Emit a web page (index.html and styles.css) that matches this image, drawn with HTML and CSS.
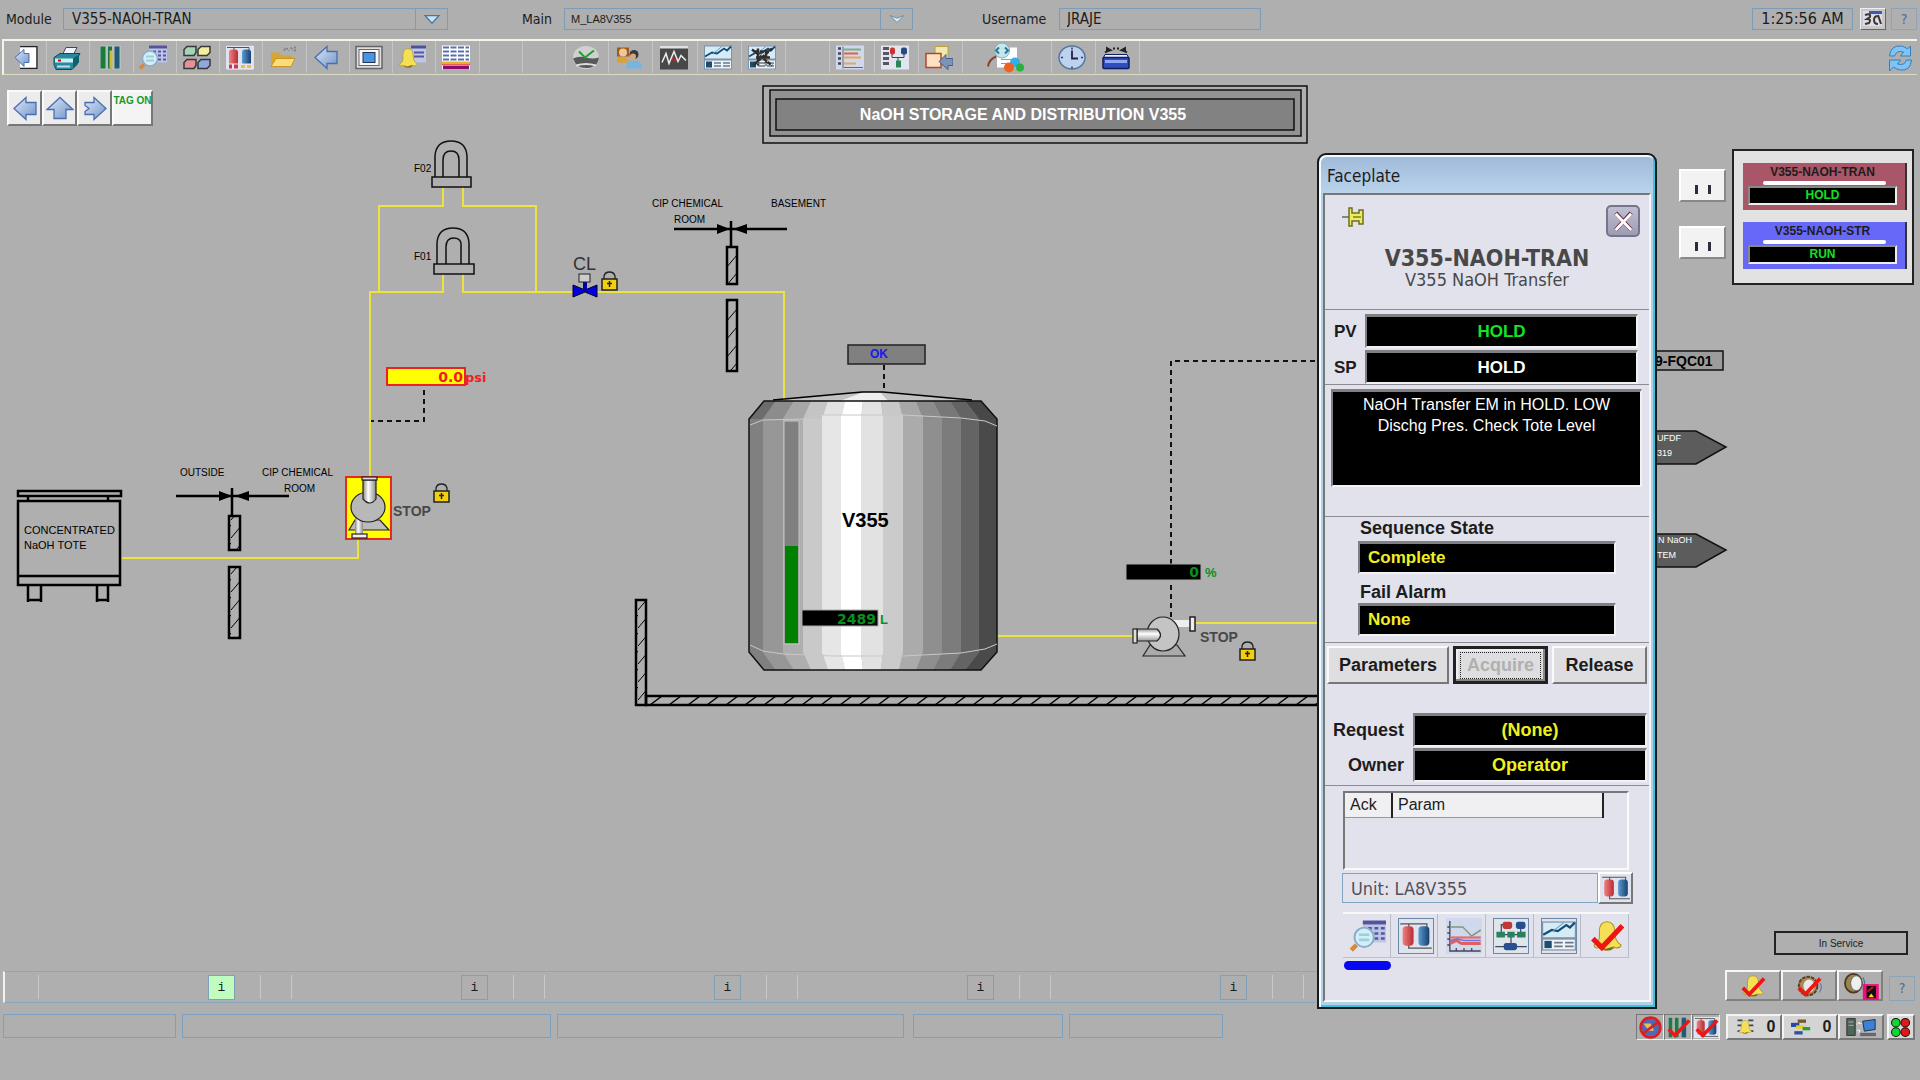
FILE: index.html
```html
<!DOCTYPE html>
<html lang="en">
<head>
<meta charset="utf-8">
<title>NaOH Storage and Distribution V355</title>
<link rel="stylesheet" href="styles.css">
</head>
<body>
<svg class="defs" aria-hidden="true">
  <defs>
    <linearGradient id="blueArrow" x1="0" y1="0" x2="1" y2="1"><stop offset="0" stop-color="#dfe8f4"/><stop offset="1" stop-color="#6f94cc"/></linearGradient>
    <linearGradient id="steel" x1="0" y1="0" x2="1" y2="0"><stop offset="0" stop-color="#888"/><stop offset=".4" stop-color="#fff"/><stop offset="1" stop-color="#888"/></linearGradient>
    <linearGradient id="steelV" x1="0" y1="0" x2="0" y2="1"><stop offset="0" stop-color="#999"/><stop offset=".4" stop-color="#fff"/><stop offset="1" stop-color="#999"/></linearGradient>
    <linearGradient id="redTank" x1="0" y1="0" x2="1" y2="0"><stop offset="0" stop-color="#f08080"/><stop offset="1" stop-color="#b82c34"/></linearGradient>
    <linearGradient id="blueTank" x1="0" y1="0" x2="1" y2="0"><stop offset="0" stop-color="#5b9bd0"/><stop offset="1" stop-color="#173e70"/></linearGradient>
    <pattern id="hatch" width="11" height="18" patternUnits="userSpaceOnUse"><path d="M0 16 L11 3" stroke="#000" stroke-width="1"/></pattern>
    <pattern id="hatchH" width="19" height="11" patternUnits="userSpaceOnUse" x="646" y="695"><path d="M4 10 L16 1" stroke="#000" stroke-width="1.5"/></pattern>
    <symbol id="lock" viewBox="0 0 17 20"><path d="M3 8V5Q4 1 8.500 1T14 5V8" fill="none" stroke="#222" stroke-width="1.300"/><rect x="1" y="8" width="15" height="11" fill="#f2cf10" stroke="#222" stroke-width="1.500"/><path d="M8.500 10v6M6 12.500h5" stroke="#222" stroke-width="1.500"/></symbol>
    <symbol id="tanks" viewBox="0 0 28 24"><rect width="28" height="24" fill="#dfe3ee"/><path d="M1 2H23V5M8 2V5M8 19V22H27" fill="none" stroke="#555"/><rect x="3" y="4" width="9" height="16" rx="3" fill="url(#redTank)"/><rect x="16" y="4" width="9" height="16" rx="3" fill="url(#blueTank)"/></symbol>
    <symbol id="bell" viewBox="0 0 28 24"><path d="M4 19Q9 17 8 9Q8 1 14 1T20 9Q20 16 25 19Q24 22 20 21Q14 25 8 21Q4 22 4 19Z" fill="#f5df55" stroke="#a8922a" stroke-width=".8"/><path d="M8 20l5 2 7-2-3 3h-5z" fill="#7d6b20"/></symbol>
    <symbol id="tick" viewBox="0 0 28 24"><path d="M3 14L10 21L26 4" fill="none" stroke="#f01414" stroke-width="4"/></symbol>
    <symbol id="magnify" viewBox="0 0 28 24"><rect x="10" y="0" width="18" height="17" fill="#bfc4e6"/><rect x="10" y="0" width="18" height="3" fill="#54549c"/><path d="M14 6h3m2 0h3m2 0h3M14 10h3m2 0h3m2 0h3M19 14h3m2 0h3" stroke="#5058a0" stroke-width="2"/><circle cx="11" cy="13" r="7.500" fill="#d4eef8" stroke="#88aec8" stroke-width="1.500"/><path d="M7 11h8M7 15h8" stroke="#9cd0dc" stroke-width="2"/><path d="M5 19L1 23" stroke="#d8883c" stroke-width="3.500"/></symbol>
    <symbol id="trend" viewBox="0 0 28 24"><rect width="28" height="24" fill="#7f93a6"/><rect x="1" y="1" width="26" height="12" fill="#d5ecf6"/><path d="M1 11L8 7L13 8L20 3L23 5L27 1" fill="none" stroke="#154d78" stroke-width="1.800"/><path d="M9 8L18 1" stroke="#62a6c8"/><rect x="1" y="15" width="26" height="8" fill="#eef3f8"/><rect x="2" y="16" width="6" height="6" fill="#1c4a70"/><path d="M10 17.500h7m2 0h7M10 20.500h7m2 0h7" stroke="#69798a" stroke-width="1.500"/></symbol>
    <symbol id="left" viewBox="0 0 28 24"><path d="M3 12L15 1V6H25V18H15V23Z" fill="url(#blueArrow)" stroke="#4a6fae" stroke-width="1.300"/></symbol>
  </defs>
</svg>

<header class="topbar">
  <label for="module" class="lbl lbl-module">Module</label>
  <div class="combo combo-module"><input id="module" value="V355-NAOH-TRAN"><button class="drop" aria-label="Open module list"><svg viewBox="0 0 20 14"><path d="M2 3H18L10 12Z" fill="#cfe2f2" stroke="#3f79a8" stroke-width="1.500"/></svg></button></div>
  <label for="main" class="lbl lbl-main">Main</label>
  <div class="combo combo-main"><input id="main" class="narrow" value="M_LA8V355"><button class="drop" aria-label="Open main list"><svg viewBox="0 0 20 14"><path d="M2 3L10 6L18 3L10 11Z" fill="#dcecf6" stroke="#5c89a8"/></svg></button></div>
  <label for="user" class="lbl lbl-user">Username</label>
  <input id="user" class="user" value="JRAJE">
  <output class="clock">1:25:56 AM</output>
  <button class="mini" aria-label="Session"><svg viewBox="0 0 24 20"><rect x="2" y="2" width="19" height="15" fill="#d8def0"/><rect x="8" y="2" width="13" height="3" fill="#4058b0"/><path d="M4 6Q10 4 9 8L6 10Q11 10 8 14L4 15" stroke="#463420" stroke-width="2" fill="none"/><path d="M17 7q-4 0-4 4t4 4M17 6l3 9" stroke="#463420" stroke-width="2" fill="none"/></svg></button>
  <button class="help">?</button>
</header>

<nav class="toolbar" aria-label="Operations">
  <div class="tools">
    <button aria-label="Exit"><svg viewBox="0 0 28 24"><path d="M10 0H28V24H10" fill="#fff"/><path d="M10 1H27V23H10" fill="none" stroke="#222" stroke-width="1.500"/><path d="M5 12L14 4V8H19V17H14V21Z" fill="url(#blueArrow)" stroke="#4a6fae"/></svg></button>
    <button aria-label="Print"><svg viewBox="0 0 28 24"><path d="M9 10L13 2H24L20 10" fill="#f0f4ff" stroke="#446"/><path d="M1 12L7 8H27L24 13V19L19 24H3L1 19Z" fill="#2a8a9c" stroke="#0c4a58"/><path d="M2 13H20V17H2Z" fill="#c8f0f0"/><path d="M20 13L26 9V17L20 22Z" fill="#10606e"/><path d="M5 15h3" stroke="#c00" stroke-width="2"/><path d="M4 21H17" stroke="#bde" stroke-width="2"/></svg></button>
    <button aria-label="Levels"><svg viewBox="0 0 28 24"><rect x="4" width="21" height="24" fill="#b8c0c4"/><path d="M7 1V23" stroke="#1b7c38" stroke-width="5"/><path d="M14 1V23" stroke="#207050" stroke-width="4"/><path d="M15 5V23" stroke="#d0bc30" stroke-width="3"/><path d="M21 1V23" stroke="#1d5c76" stroke-width="5"/></svg></button>
    <button aria-label="Browse detail"><svg><use href="#magnify"/></svg></button>
    <button aria-label="Overview"><svg viewBox="0 0 28 24"><g stroke="#383838" stroke-width="1.500"><path d="M4 1h9v6l-2 3H1V4z" fill="#a6d4b6"/><path d="M18 1h9v6l-3 3h-9V4z" fill="#f2efa0"/><path d="M4 14h9v6l-2 3H1v-6z" fill="#e89098"/><path d="M18 14h9v6l-3 3h-9v-6z" fill="#90a8dc"/></g></svg></button>
    <button aria-label="Units"><svg viewBox="0 0 28 24"><use href="#tanks" width="28" height="24"/><rect x="1" y="18" width="26" height="6" fill="#e8e4ee"/><path d="M3 21h3m2 0h4" stroke="#c83850" stroke-width="4"/><path d="M15 21h4m2 0h4" stroke="#e0c050" stroke-width="3"/></svg></button>
    <button aria-label="Open"><svg viewBox="0 0 28 24"><path d="M2 7h8l2 3h11v10H2z" fill="#d9a52f"/><path d="M7 13h19l-4 8H2z" fill="#f8dd7a" stroke="#c8952a"/><path d="M15 5q2-4 5 0m2-3l2 3m2-4v6" fill="none" stroke="#777" stroke-width="1.500" stroke-dasharray="2 1"/></svg></button>
    <button aria-label="Back"><svg><use href="#left"/></svg></button>
    <button aria-label="Display"><svg viewBox="0 0 28 24"><rect x="1" y="1" width="26" height="22" fill="#ddd" stroke="#666" stroke-width="1.500"/><rect x="4" y="4" width="20" height="16" fill="#f8f8f8" stroke="#666"/><rect x="8" y="7" width="12" height="10" fill="#4a94e4" stroke="#235"/></svg></button>
    <button aria-label="Alarm list"><svg viewBox="0 0 28 24"><rect x="12" y="0" width="15" height="17" fill="#c0c6e4"/><path d="M12 1.500h15" stroke="#4850a0" stroke-width="3"/><path d="M15 7h10M15 11h10" stroke="#5058a0" stroke-width="2"/><use href="#bell" x="-3" y="1" width="24" height="23"/></svg></button>
    <button aria-label="Event table"><svg viewBox="0 0 28 24"><rect width="28" height="24" fill="#fff"/><path d="M1 2h26M1 6h26M1 10h26M1 14h26" stroke="#5870a8" stroke-width="2" stroke-dasharray="6 1.500"/><path d="M0 17h28" stroke="#ecb030" stroke-width="2"/><path d="M0 19h28" stroke="#e06060" stroke-width="2"/><path d="M1 22h26" stroke="#8c0c6c" stroke-width="3.500"/></svg></button>
    <span></span><span></span>
    <button aria-label="Acknowledge"><svg viewBox="0 0 28 24"><ellipse cx="14" cy="12" rx="13" ry="11.500" fill="#d0d0d0"/><path d="M1 13Q7 10 14 12T27 12Q26 20 19 22Q10 24 4 19Z" fill="#585858"/><path d="M4 20Q14 17 24 20" stroke="#ddd" stroke-width="2" fill="none"/><path d="M7 6L13 12L22 5" fill="none" stroke="#18a030" stroke-width="2"/></svg></button>
    <button aria-label="Users"><svg viewBox="0 0 28 24"><path d="M2 2h12v9H2z" fill="#a05a20"/><circle cx="8" cy="7" r="4" fill="#f0c890"/><path d="M2 17V13Q8 9 14 15V17Z" fill="#e0a030"/><circle cx="19" cy="9" r="4.500" fill="#333a40"/><circle cx="18" cy="11" r="3" fill="#d8a878"/><path d="M11 23Q11 15 19 15T27 23Z" fill="#78b4e0"/></svg></button>
    <button aria-label="Signal chart"><svg viewBox="0 0 28 24"><rect width="28" height="24" fill="#484848"/><rect width="28" height="3" fill="#e0e0e0"/><path d="M2 17L6 8L9 18L14 6L18 16L21 10L26 15" fill="none" stroke="#eee" stroke-width="1.500"/><path d="M12 13l4 3" stroke="#d02020" stroke-width="2"/></svg></button>
    <button aria-label="Trend"><svg><use href="#trend"/></svg></button>
    <button aria-label="Trend off"><svg viewBox="0 0 28 24"><use href="#trend" width="28" height="24"/><path d="M4 4L24 20M24 3L5 20M7 6h14M8 12h14M10 3v17M18 4v16" stroke="#302d2b" stroke-width="2.500" stroke-dasharray="4 1"/></svg></button>
    <span></span>
    <button aria-label="Recipe list"><svg viewBox="0 0 28 24"><rect width="28" height="24" fill="#d2d8ec"/><path d="M2 3h3M2 8h3M2 13h3M2 18h3" stroke="#445" stroke-width="2.500"/><path d="M7 1v22M8 22h19" stroke="#667"/><path d="M8 4h17" stroke="#78b080" stroke-width="2"/><path d="M8 8h14" stroke="#e06050" stroke-width="2"/><path d="M8 12h17M8 18h12" stroke="#e0a858" stroke-width="2"/></svg></button>
    <button aria-label="Procedure"><svg viewBox="0 0 28 24"><rect width="28" height="24" fill="#e2e4ee"/><path d="M2 3h6M2 8h6M2 13h6M2 18h6" stroke="#556" stroke-width="3"/><path d="M11 7v5h12V7M17 12v4" fill="none" stroke="#444"/><rect x="9" y="2" width="5" height="7" rx="2" fill="#cc3030"/><rect x="20" y="2" width="6" height="7" rx="2" fill="#244a80"/><rect x="15" y="15" width="5" height="7" fill="#28865a"/></svg></button>
    <button aria-label="Transfer"><svg viewBox="0 0 28 24"><rect x="10" y="1" width="13" height="12" fill="#f0e8b0" stroke="#c0a040"/><rect x="1" y="8" width="15" height="14" fill="#ffe0c0" stroke="#b04828" stroke-width="1.500"/><path d="M14 16L21 9V13H28V20H23V24Z" fill="#7d93b8" stroke="#46608c"/></svg></button>
    <button class="wide" aria-label="Search batch"><svg viewBox="0 0 40 30"><rect x="12" y="5" width="20" height="20" fill="#fff"/><path d="M16 17h12M16 21h12" stroke="#999"/><circle cx="17" cy="8" r="7.500" fill="#c4e6ee" stroke="#88aab4"/><path d="M14 5l-3 3 3 3M20 5l3 3-3 3" fill="none" stroke="#2c7890" stroke-width="2"/><path d="M11 14Q4 17 3 24" stroke="#884030" stroke-width="2" fill="none"/><circle cx="30" cy="20" r="5" fill="#30b0e8"/><circle cx="24" cy="25" r="5" fill="#f06020"/><circle cx="35" cy="25" r="4" fill="#28b040"/></svg></button>
    <button aria-label="Clock"><svg viewBox="0 0 28 24"><ellipse cx="14" cy="12" rx="13" ry="11.500" fill="#bdd2ee" stroke="#55779e" stroke-width="1.500"/><path d="M14 5V13H20" fill="none" stroke="#224" stroke-width="1.800"/><path d="M14 2v2m0 17v2M3 12h2m18 0h2" stroke="#335" stroke-width="1.500"/></svg></button>
    <button aria-label="Archive"><svg viewBox="0 0 28 24"><path d="M4 1l7 4-7 2zM24 1l-7 4 7 2z" fill="#222"/><path d="M11 3h2m2 0h2M3 7l5-3M25 7l-5-3" stroke="#222" stroke-width="2"/><path d="M1 13L3 9H25L27 13Z" fill="#eef" stroke="#112060"/><rect x="1" y="12" width="26" height="11" rx="1" fill="#2f4ec0" stroke="#101c60" stroke-width="1.500"/><path d="M3 16h22" stroke="#90a8f0" stroke-width="3"/></svg></button>
    <span></span>
  </div>
  <button class="refresh" aria-label="Refresh"><svg viewBox="0 0 24 28"><path d="M1 12Q2 1 13 2Q17 3 19 5L22 2V12H12L15 8Q8 6 6 12Z" fill="#80c4f6" stroke="#3080c0"/><path d="M23 16Q22 27 12 26Q7 25 5 23L1 27V16H12L9 20Q16 22 18 16Z" fill="#80c4f6" stroke="#3080c0"/></svg></button>
</nav>

<main class="stage">
  <svg class="diagram" viewBox="0 75 1920 895" role="img" aria-label="NaOH storage and distribution diagram">
    <g class="pipe">
      <path d="M443 187V206H379V292"/><path d="M463 187V206H536V292"/>
      <path d="M443 274V292H370V476"/><path d="M463 274V292H784V401"/>
      <path d="M358 539V558H122"/><path d="M997 636H1134"/><path d="M1195 623H1320"/>
    </g>
    <g class="dash"><path d="M424 390V421H371"/><path d="M884 365V394"/><path d="M1171 564V361H1320"/><path d="M1171 585V618"/></g>

    <g class="line">
      <path d="M435 177V156Q436 141 451 141T467 156V177"/><path d="M443 177V160Q443 151 451 151T459 160V177"/><rect x="432" y="177" width="39" height="10"/>
      <path d="M437 264V243Q438 228 453 228T469 243V264"/><path d="M446 264V247Q446 238 454 238T461 247V264"/><rect x="434" y="264" width="40" height="10"/>
    </g>
    <text class="thin" x="414" y="172">F02</text><text class="thin" x="414" y="260">F01</text>

    <g class="line heavy">
      <rect x="18" y="491" width="103" height="5"/><path d="M28 496V501M108 496V501"/><rect x="18" y="501" width="102" height="84"/><path d="M18 576H120M28 585V602M41 585V602M28 600H41M97 585V602M108 585V602M97 600H108"/>
    </g>
    <text class="tote" x="24" y="534">CONCENTRATED</text><text class="tote" x="24" y="549">NaOH TOTE</text>

    <g class="line heavy"><path d="M176 496H289M232 488V516"/><rect x="229" y="516" width="11" height="34" fill="url(#hatch)"/><rect x="229" y="567" width="11" height="71" fill="url(#hatch)"/></g>
    <path d="M219 491L232 496L219 501ZM249 491L235 496L249 501Z"/>
    <text class="thin" x="180" y="476">OUTSIDE</text><text class="thin" x="262" y="476">CIP CHEMICAL</text><text class="thin" x="284" y="492">ROOM</text>

    <g class="line heavy"><path d="M674 229H787M731 221V247"/><rect x="727" y="247" width="10" height="37" fill="url(#hatch)"/><rect x="727" y="300" width="10" height="71" fill="url(#hatch)"/></g>
    <path d="M717 224L730 229L717 234ZM747 224L733 229L747 234Z"/>
    <text class="thin" x="652" y="207">CIP CHEMICAL</text><text class="thin" x="674" y="223">ROOM</text><text class="thin" x="771" y="207">BASEMENT</text>

    <rect x="346" y="477" width="45" height="62" fill="#ff0" stroke="#e8281c" stroke-width="2"/>
    <g stroke="#222" stroke-width="1.200"><path d="M349 530L355 520H380L389 530Z" fill="#bbb"/><path d="M355 515H363V535H355Z" fill="url(#steel)" stroke="none"/><rect x="352" y="534" width="15" height="4" fill="#eee"/><ellipse cx="368" cy="507" rx="17" ry="15" fill="#b8b8b8"/><path d="M363 480H376V499Q370 507 363 499Z" fill="url(#steel)"/><rect x="362" y="477" width="15" height="3" fill="#ddd"/></g>
    <text class="stop" x="393" y="516">STOP</text><use href="#lock" x="433" y="483" width="17" height="20"/>

    <path d="M573 285L585 290L597 285V297L585 292L573 297Z" fill="#0000e0" stroke="#002"/><path d="M585 282V291" stroke="#00a" stroke-width="4"/><rect x="579" y="274" width="11" height="8" fill="#ccc" stroke="#222"/>
    <text class="cl" x="573" y="270">CL</text><use href="#lock" x="601" y="271" width="17" height="20"/>

    <rect x="387" y="368" width="78" height="17" fill="#ff0" stroke="#f02020" stroke-width="2"/>
    <text class="num red" x="463" y="382" text-anchor="end">0.0</text><text class="psi red" x="465" y="382">psi</text>

    <rect x="848" y="345" width="77" height="19" fill="#808080" stroke="#222" stroke-width="1.500"/><text class="ok" x="870" y="358">OK</text>

    <g class="tank">
      <path d="M764 401L749 419H763L776 401Z" fill="#6c6c6c"/><path d="M776 401L763 419H783L794 401Z" fill="#8c8c8c"/><path d="M794 401L783 419H803L811 401Z" fill="#a6a6a6"/><path d="M811 401L803 419H822L828 401Z" fill="#c4c4c4"/><path d="M828 401L822 419H841L845 401Z" fill="#e2e2e2"/><path d="M845 401L841 419H861L863 401Z" fill="#fff"/><path d="M863 401L861 419H883L881 401Z" fill="#e2e2e2"/><path d="M881 401L883 419H903L899 401Z" fill="#c8c8c8"/><path d="M899 401L903 419H923L916 401Z" fill="#a8a8a8"/><path d="M916 401L923 419H942L933 401Z" fill="#8c8c8c"/><path d="M933 401L942 419H961L950 401Z" fill="#787878"/><path d="M950 401L961 419H979L965 401Z" fill="#646464"/><path d="M965 401L979 419H997L981 401Z" fill="#484848"/>
      <path d="M749 419h14v233h-14z" fill="#808080"/><path d="M763 419h20v233h-20z" fill="#979797"/><path d="M783 419h20v233h-20z" fill="#aeaeae"/><path d="M803 419h19v233h-19z" fill="#c9c9c9"/><path d="M822 415h19v240h-19z" fill="#e6e6e6"/><path d="M841 415h20v240h-20z" fill="#fff"/><path d="M861 415h22v240h-22z" fill="#e2e2e2"/><path d="M883 415h20v240h-20z" fill="#cbcbcb"/><path d="M903 415h20v240h-20z" fill="#ababab"/><path d="M923 419h19v233h-19z" fill="#8f8f8f"/><path d="M942 419h19v233h-19z" fill="#7c7c7c"/><path d="M961 419h18v233h-18z" fill="#646464"/><path d="M979 419h18v233h-18z" fill="#4a4a4a"/>
      <path d="M764 670L749 652H763L776 670Z" fill="#808080"/><path d="M776 670L763 652H783L794 670Z" fill="#979797"/><path d="M794 670L783 652H803L811 670Z" fill="#aeaeae"/><path d="M811 670L803 652H822L828 670Z" fill="#c9c9c9"/><path d="M828 670L822 652H841L845 670Z" fill="#e6e6e6"/><path d="M845 670L841 652H861L863 670Z" fill="#fff"/><path d="M863 670L861 652H883L881 670Z" fill="#e2e2e2"/><path d="M881 670L883 652H903L899 670Z" fill="#cbcbcb"/><path d="M899 670L903 652H923L916 670Z" fill="#ababab"/><path d="M916 670L923 652H942L933 670Z" fill="#8f8f8f"/><path d="M933 670L942 652H961L950 670Z" fill="#7c7c7c"/><path d="M950 670L961 652H979L965 670Z" fill="#646464"/><path d="M965 670L979 652H997L981 670Z" fill="#4a4a4a"/>
      <path d="M773 401L862 392H883L972 401Z" fill="#c2c2c2"/><path d="M840 401L864 392H880L888 401Z" fill="#eee"/>
      <path d="M773 400L862 392H883L972 400" fill="none" stroke="#000" stroke-width="1.500"/>
      <path d="M764 401H981L997 419V652L981 670H764L749 652V419Z" fill="none" stroke="#111" stroke-width="1.500"/>
      <path d="M750 425L763 420L803 419L822 415H903L961 418L985 421L997 426M750 645L763 651L783 654L833 656H903L961 653L985 649L997 644" fill="none" stroke="#c8c8c8"/>
    </g>
    <rect x="784" y="421" width="15" height="223" fill="#808080" stroke="#c4c4c4"/><rect x="785" y="546" width="13" height="97" fill="#008000"/>
    <text class="vessel" x="842" y="527">V355</text>
    <rect x="802" y="610" width="76" height="16" stroke="#aaa"/><text class="num green" x="876" y="624" text-anchor="end">2489</text><text class="unit green" x="880" y="624">L</text>

    <g class="line heavy"><rect x="636" y="600" width="10" height="105" fill="url(#hatch)"/><rect x="646" y="696" width="700" height="9" fill="url(#hatchH)"/></g>

    <g stroke="#222" stroke-width="1.200"><path d="M1143 656L1150 645H1177L1185 656Z" fill="#aaa"/><path d="M1172 620h18v7h-18z" fill="#eee" stroke="none"/><ellipse cx="1163" cy="634" rx="16" ry="17" fill="#c4c4c4"/><path d="M1137 629H1157Q1164 635 1157 641H1137Z" fill="url(#steelV)"/><rect x="1133" y="629" width="4" height="14" fill="#ddd"/><rect x="1190" y="617" width="5" height="14" fill="#eee" stroke-width="1.500"/></g>
    <text class="stop" x="1200" y="642">STOP</text><use href="#lock" x="1239" y="641" width="17" height="20"/>
    <rect x="1126" y="564" width="75" height="16" stroke="#aaa"/><text class="num green" x="1199" y="577" text-anchor="end">0</text><text class="unit green" x="1205" y="577">%</text>

    <g fill="none" stroke="#111" stroke-width="1.500"><rect x="763" y="86" width="544" height="57"/><rect x="770" y="90" width="531" height="46" fill="#929292"/><rect x="776" y="99" width="518" height="31" fill="#828282"/></g>
    <text class="heading" x="1023" y="120" text-anchor="middle">NaOH STORAGE AND DISTRIBUTION V355</text>

    <rect x="1640" y="351" width="83" height="19" fill="#9c9c9c" stroke="#111" stroke-width="1.500"/><text class="tag" x="1655" y="366">9-FQC01</text>
    <path d="M1640 431H1696L1726 447L1696 464H1640Z" fill="#5c5c5c" stroke="#111" stroke-width="1.500"/><text class="dest" x="1657" y="441">UFDF</text><text class="dest" x="1657" y="456">319</text>
    <path d="M1640 534H1696L1726 550L1696 567H1640Z" fill="#5c5c5c" stroke="#111" stroke-width="1.500"/><text class="dest" x="1658" y="543">N NaOH</text><text class="dest" x="1657" y="558">TEM</text>
  </svg>

  <div class="pager">
    <button aria-label="Previous"><svg><use href="#left"/></svg></button>
    <button aria-label="Up"><svg viewBox="0 0 28 24"><path d="M14 1L27 13H20V22H8V13H1Z" fill="url(#blueArrow)" stroke="#4a6fae" stroke-width="1.300"/></svg></button>
    <button aria-label="Next"><svg viewBox="0 0 28 24"><path d="M25 12L13 1V6H4V9L8 12L4 15V18H13V23Z" fill="url(#blueArrow)" stroke="#4a6fae" stroke-width="1.300"/></svg></button>
    <button class="tagon">TAG ON</button>
  </div>

  <div class="holds"><button aria-label="Pause transfer"><i></i><i></i></button><button aria-label="Pause storage"><i></i><i></i></button></div>
  <section class="modules">
    <div class="mod tran"><span class="name">V355-NAOH-TRAN</span><span class="rule"></span><span class="state">HOLD</span></div>
    <div class="mod str"><span class="name">V355-NAOH-STR</span><span class="rule"></span><span class="state">RUN</span></div>
  </section>
  <button class="service">In Service</button>

  <section class="faceplate" aria-label="Faceplate">
    <h2 class="caption">Faceplate</h2>
    <div class="client">
      <div class="head">
        <div class="headrow">
          <button class="pin" aria-label="Pin"><svg viewBox="0 0 26 20"><path d="M0 10H7" stroke="#666" stroke-width="1.500"/><path d="M7 1v18h3v-5h7v3h4V3h-4v3h-7V1z" fill="#ecec60" stroke="#6e6e20" stroke-width="1.500"/><path d="M11 10h8" stroke="#9a9a30" stroke-width="2"/></svg></button>
          <button class="close" aria-label="Close"><svg viewBox="0 0 34 32"><path d="M8 6L27 27M27 6L8 27" stroke="#6c2c3c" stroke-width="5"/><path d="M8 7L27 27M27 7L8 27" stroke="#fff" stroke-width="3.500"/></svg></button>
        </div>
        <h1>V355-NAOH-TRAN</h1>
        <p>V355 NaOH Transfer</p>
      </div>
      <div class="values">
        <span>PV</span><output class="well green-t">HOLD</output>
        <span>SP</span><output class="well">HOLD</output>
      </div>
      <div class="note"><p class="well msg">NaOH Transfer EM in HOLD. LOW<br>Dischg Pres. Check Tote Level</p></div>
      <div class="seq">
        <span>Sequence State</span><output class="well yellow">Complete</output>
        <span class="fail">Fail Alarm</span><output class="well yellow">None</output>
      </div>
      <div class="actions">
        <div class="btns"><button class="b-par">Parameters</button><button class="b-acq" disabled><span>Acquire</span></button><button class="b-rel">Release</button></div>
        <div class="owner">
          <span>Request</span><output class="well yellow">(None)</output>
          <span>Owner</span><output class="well yellow">Operator</output>
        </div>
      </div>
      <div class="detail">
        <div class="grid"><table><thead><tr><th class="c-ack">Ack</th><th class="c-par">Param</th></tr></thead></table></div>
        <div class="unitrow"><input aria-label="Unit" value="Unit: LA8V355"><button aria-label="Unit faceplate"><svg><use href="#tanks"/></svg></button></div>
        <div class="links">
          <button aria-label="Detail"><svg><use href="#magnify"/></svg></button>
          <button aria-label="Units"><svg class="framed"><use href="#tanks"/></svg></button>
          <button aria-label="History"><svg viewBox="0 0 28 24" preserveAspectRatio="none"><rect width="28" height="24" fill="#d0d8ee"/><path d="M3 2V22H27" fill="none" stroke="#445"/><path d="M3 6H13L20 12L27 8" fill="none" stroke="#7a9a80"/><path d="M3 13h24" stroke="#e07070" stroke-width="1.500"/><path d="M3 17l5-2 4 2h15" fill="none" stroke="#e06060" stroke-width="2"/><path d="M3 15l6-1 5 1h13" fill="none" stroke="#7070e0"/><path d="M1 6h2M1 10h2M1 14h2M1 18h2M8 22v-2M14 22v-2M20 22v-2" stroke="#445"/></svg></button>
          <button aria-label="Control modules"><svg class="framed" viewBox="0 0 28 24" preserveAspectRatio="none"><rect width="28" height="24" fill="#dfe6ea"/><path d="M10 4H6V11H22V4H19M14 11V19M1 19.500h26" fill="none" stroke="#446"/><rect x="7" y="2" width="8" height="5" rx="2" fill="#c03838"/><rect x="18" y="2" width="8" height="5" rx="2" fill="#284c90"/><path d="M2 9h7v4H2zM11 9h6v4h-6zM19 9h7v4h-7z" fill="#288060"/><rect x="8" y="17" width="11" height="5" rx="2" fill="#28508c"/></svg></button>
          <button aria-label="Trend"><svg class="framed"><use href="#trend"/></svg></button>
          <button aria-label="Acknowledge alarms"><svg viewBox="0 0 28 24"><use href="#bell" width="28" height="24"/><use href="#tick" width="28" height="24"/></svg></button>
        </div>
        <div class="marker"></div>
      </div>
    </div>
  </section>
</main>

<footer class="bottom">
  <div class="row">
    <div class="banner">
      <span class="lead"></span>
      <div class="slot"><button class="on">i</button></div><span class="gap"></span>
      <div class="slot"><button>i</button></div><span class="gap"></span>
      <div class="slot"><button>i</button></div><span class="gap"></span>
      <div class="slot"><button>i</button></div><span class="gap"></span>
      <div class="slot"><button>i</button></div><span class="gap"></span>
    </div>
    <div class="acks">
      <button aria-label="Acknowledge"><svg viewBox="0 0 28 24"><use href="#bell" width="28" height="24"/><use href="#tick" width="28" height="24"/></svg></button>
      <button aria-label="Silence horn"><svg viewBox="0 0 28 24"><ellipse cx="13" cy="12" rx="10" ry="10" fill="#a88858" stroke="#5a3c18" stroke-width="2" stroke-dasharray="4 1"/><ellipse cx="14" cy="12" rx="6" ry="7" fill="#e8e8e8"/><path d="M26 9q3 5-1 10" fill="none" stroke="#5060a0"/><use href="#tick" width="28" height="24"/></svg></button>
      <button aria-label="Horn off" class="horn"><svg viewBox="0 0 40 32"><ellipse cx="13" cy="13" rx="9" ry="10" fill="#9c8450" stroke="#4c3820" stroke-width="2"/><ellipse cx="16" cy="13" rx="6" ry="8" fill="#eee" stroke="#666"/><path d="M23 7q4 6 0 13" fill="none" stroke="#6070a0" stroke-width="1.500"/><rect x="23" y="14" width="17" height="17" fill="#f0107c"/><rect x="27" y="16" width="10" height="13" fill="#111"/><path d="M29 28h6l-3-4z" fill="#fd0"/><path d="M28 22l6-5" stroke="#c01818" stroke-width="2"/></svg></button>
    </div>
    <button class="help low">?</button>
  </div>
  <div class="row second">
    <div class="fields"><span class="f1"></span><span class="f2"></span><span class="f3"></span><span class="f4"></span><span class="f5"></span></div>
    <div class="filters">
      <button aria-label="Clear area"><svg viewBox="0 0 28 25"><circle cx="14" cy="12" r="10" fill="#5068b8"/><path d="M6 8h8l4 8h-6z" fill="#e0c060"/><circle cx="14" cy="12.500" r="11" fill="none" stroke="#d82020" stroke-width="3"/><path d="M6 19L23 6" stroke="#d82020" stroke-width="3"/></svg></button>
      <button aria-label="Levels"><svg viewBox="0 0 28 24"><path d="M5 1V23M12 1V23" stroke="#1b7c48" stroke-width="4"/><path d="M20 1V23" stroke="#1d5c76" stroke-width="5"/><use href="#tick" width="28" height="24"/></svg></button>
      <button aria-label="Units"><svg viewBox="0 0 28 24"><use href="#tanks" width="28" height="24"/><use href="#tick" width="28" height="24"/></svg></button>
    </div>
    <div class="counts">
      <button><svg viewBox="0 0 28 24"><path d="M5 4h6M5 10h5M5 17h4M18 4h6M19 10h5M20 17h4" stroke="#444" stroke-width="2"/><use href="#bell" x="4" y="2" width="20" height="20"/></svg>0</button>
      <button><svg viewBox="0 0 28 24"><path d="M10 3h10v4H10z" fill="#785828"/><path d="M2 7h10v5H2z" fill="#2848b0"/><path d="M8 10h10v4H8z" fill="#e8d020"/><path d="M16 12h9v4h-9z" fill="#28a030"/><path d="M6 17h10v4H6z" fill="#3050a0"/></svg>0</button>
      <button class="node" aria-label="Workstation"><svg viewBox="0 0 40 24"><rect x="3" y="2" width="10" height="20" fill="#4d6658" stroke="#222"/><path d="M5 6h6M5 10h6" stroke="#bbb"/><path d="M15 9l3-3v2h3M15 16h4l-2 3" fill="none" stroke="#fff"/><path d="M22 5L37 3V15L24 17Z" fill="#3c80d8" stroke="#123"/><path d="M19 21h19" stroke="#667" stroke-width="4"/></svg></button>
    </div>
    <button class="lights" aria-label="Status"><svg viewBox="0 0 28 26"><g stroke="#111" stroke-width="1.200"><circle cx="8" cy="8" r="5" fill="#10d830"/><circle cx="8" cy="19" r="5" fill="#10d830"/><circle cx="19" cy="8" r="5" fill="#e01818"/><circle cx="19" cy="19" r="5" fill="#e01818"/></g></svg></button>
  </div>
</footer>
</body>
</html>
```

FILE: styles.css
```css
* { box-sizing: border-box; }
body {
  margin: 0;
  min-height: 100vh;
  display: flex;
  flex-direction: column;
  background: #afafaf;
  color: #1c1c1c;
  font-family: "DejaVu Sans Condensed", "Noto Sans", sans-serif;
  font-size: 14px;
  overflow-x: hidden;
}
h1, h2, p { margin: 0; font-weight: normal; }
button, input { font: inherit; color: inherit; padding: 0; border: 0; background: none; border-radius: 0; }
button { display: flex; align-items: center; justify-content: center; }
svg { display: block; }
.defs { position: absolute; width: 0; height: 0; }

/* Top bar */
.topbar { display: flex; align-items: center; height: 39px; padding: 0 3px 1px 6px; }
.topbar input { height: 22px; min-width: 0; font-size: 15px; }
.lbl-module { width: 57px; }
.combo { display: flex; height: 22px; border: 1px solid #7c9cb8; }
.combo input { flex: 1; height: 20px; padding-left: 8px; }
.combo-module { width: 385px; }
.combo-main { width: 349px; }
.drop { width: 32px; border-left: 1px solid #7c9cb8; }
.drop svg { width: 18px; height: 12px; }
.lbl-main { margin-left: 74px; width: 42px; }
.topbar .narrow { font-family: "Liberation Sans", sans-serif; font-size: 11px; padding-left: 6px; }
.lbl-user { margin-left: 69px; width: 77px; }
.user { width: 202px; border: 1px solid #7c9cb8; padding-left: 7px; }
.clock { margin-left: auto; width: 101px; height: 22px; line-height: 20px; font-size: 16px; border: 1px solid #7c9cb8; text-align: center; }
.mini { margin-left: 7px; width: 26px; height: 22px; background: #c8c8c8; border: 1px solid; border-color: #eee #666 #666 #eee; }
.mini svg { width: 24px; height: 20px; }
.help { margin-left: 5px; width: 26px; height: 22px; border: 1px solid #8ca4b8; color: #5068a0; }

/* Toolbar */
.toolbar { display: flex; justify-content: space-between; align-items: center; height: 36px; margin: 0 3px 0 2px; border-top: 2px solid #f4f4e8; border-bottom: 1px solid #dcdcc4; border-left: 2px solid #f4f4e8; }
.tools { display: grid; grid-template-columns: repeat(14, 43fr) repeat(12, 44fr); width: 60%; height: 33px; max-width: 1136px; }
.tools > * { border-right: 1px solid #c4c4c4; padding-right: 3px; }
.tools svg { width: 28px; height: 25px; }
.tools .wide { grid-column: span 2; }
.tools .wide svg { width: 40px; height: 31px; }
.refresh svg { width: 25px; height: 28px; margin-right: 4px; }

/* Process graphic */
.stage { position: relative; }
.diagram { width: 100%; height: auto; }
.pipe path { fill: none; stroke: #ece43c; stroke-width: 2; }
.dash path { fill: none; stroke: #111; stroke-width: 2; stroke-dasharray: 5 4; }
.line { fill: none; stroke: #111; stroke-width: 1.5; }
.heavy { stroke: #000; stroke-width: 2.5; }
.diagram text { font-family: "Liberation Sans", sans-serif; }
.diagram .thin { font-size: 10px; }
.diagram .tote { font-size: 11px; }
.diagram .stop { font-size: 14px; font-weight: bold; fill: #484848; }
.diagram .cl { font-size: 18px; fill: #333; }
.diagram .num { font-family: "DejaVu Sans", sans-serif; font-weight: bold; font-size: 14px; }
.diagram .psi { font-family: "DejaVu Sans", sans-serif; font-weight: bold; font-size: 13px; }
.diagram .unit { font-weight: bold; font-size: 13px; }
.diagram .red { fill: #f02020; }
.diagram .green { fill: #08901c; }
.diagram .ok { font-size: 12px; font-weight: bold; fill: #1818f0; }
.diagram .vessel { font-size: 20px; font-weight: bold; }
.diagram .heading { font-size: 16px; font-weight: bold; fill: #fff; }
.diagram .tag { font-size: 14px; font-weight: bold; }
.diagram .dest { font-size: 9px; fill: #fff; }

.pager { position: absolute; left: 7px; top: 15px; display: flex; }
.pager button { width: 35px; height: 36px; background: #ececec; border: 2px solid; border-color: #fafafa #777 #777 #fafafa; }
.pager svg { width: 28px; height: 27px; }
.pager .tagon { width: 41px; align-items: flex-start; padding-top: 2px; background: #f4f4f4; color: #18982c; font: bold 10px/14px "Liberation Sans", sans-serif; white-space: nowrap; }

.holds { position: absolute; right: 194px; top: 94px; display: grid; gap: 24px; }
.holds button { width: 47px; height: 33px; gap: 10px; padding-top: 8px; background: #f2f2f2; border: 2px solid; border-color: #fff #888 #888 #fff; }
.holds i { width: 3px; height: 9px; background: #2c2c3c; }

.modules { position: absolute; right: 6px; top: 74px; width: 182px; height: 136px; padding: 12px 5px 0 9px; border: 2px solid #222; background: #e2e2e2; display: grid; gap: 12px; align-content: start; }
.mod { height: 47px; padding: 1px 8px 0 5px; border-right: 2px solid #333; text-align: center; display: flex; flex-direction: column; align-items: stretch; }
.tran { background: #a85668; }
.str { background: #6868f8; }
.name { font: bold 12px/16px "Liberation Sans", sans-serif; }
.mod .rule { height: 4px; margin: 1px 11px 0 15px; border-radius: 2px; background: #fff; }
.mod .state { margin-top: 1px; height: 19px; background: #000; border: 2px solid; border-color: #888 #eee #eee #888; color: #10e020; font: bold 12px/15px "Liberation Sans", sans-serif; }
.service { position: absolute; right: 12px; bottom: 15px; width: 134px; height: 24px; border: 2px solid #222; font: 10px "Liberation Sans", sans-serif; }

/* Faceplate window */
.faceplate { position: absolute; z-index: 2; right: 263px; top: 78px; width: 340px; height: 856px; padding: 0 4px 5px; border: 2px solid #141c20; border-radius: 9px 9px 0 0; background: #b4cfe8; box-shadow: inset 2px 2px #f2fafe, inset -2px -2px #40c4dc; display: flex; flex-direction: column; font-family: "Liberation Sans", sans-serif; }
.caption { height: 36px; margin: 2px -2px 0; padding: 2px 2px 0 6px; font: 17px/34px "DejaVu Sans Condensed", sans-serif; background: linear-gradient(#a0bada, #bad3ec); border-radius: 6px 6px 0 0; }
.client { flex: 1; background: #e2e2ec; border: 2px solid; border-color: #777 #f6f6f6 #f6f6f6 #777; font-size: 17px; font-weight: bold; }
.client > * { border-bottom: 1px solid #8c8c92; }
.client > .detail { border: 0; }
.well { display: block; background: #000; color: #fff; border-top: 3px solid #808084; border-left: 2px solid #808084; border-right: 2px solid #f2f2f2; border-bottom: 2px solid #f2f2f2; text-align: center; }
.green-t { color: #14e428; }
.yellow { color: #f0f020; }
.head { height: 115px; text-align: center; color: #484848; font-family: "DejaVu Sans Condensed", sans-serif; }
.headrow { display: flex; justify-content: space-between; padding: 10px 9px 0 17px; height: 50px; }
.pin svg { width: 26px; height: 20px; }
.pin { align-items: flex-start; padding-top: 2px; }
.close { width: 34px; height: 32px; border: 2px solid #74748c; border-radius: 5px; background: linear-gradient(#c0c0d2, #9c9cb4); }
.close svg { width: 28px; height: 26px; }
.head h1 { font-size: 23px; line-height: 26px; font-weight: bold; }
.head p { font-size: 18px; line-height: 18px; font-weight: normal; }
.values { height: 75px; padding: 4px 11px 0 4px; display: grid; grid-template-columns: 36px 1fr; grid-auto-rows: 34px; gap: 2px 0; line-height: 29px; align-items: center; }
.values > span { padding-left: 5px; }
.values .well { height: 34px; }
.note { height: 132px; padding: 4px 7px 0 6px; }
.msg { height: 98px; padding-top: 2px; font-size: 16px; line-height: 21px; font-weight: normal; }
.seq { height: 126px; padding: 1px 33px 0 33px; display: grid; grid-template-rows: 23px 33px 29px 33px; grid-template-columns: 1fr; line-height: 21px; }
.seq > span { padding-left: 2px; font-size: 18px; }
.seq .fail { padding-top: 8px; line-height: 20px; }
.seq .well { text-align: left; padding-left: 8px; line-height: 28px; }
.actions { height: 143px; padding: 3px 2px 0 2px; font-size: 18px; }
.btns { display: flex; gap: 4px; height: 38px; }
.btns button { background: #dedee0; border: 2px solid; border-color: #fafafa #777 #777 #fafafa; }
.b-par { width: 122px; }
.btns .b-acq { width: 95px; border: 3px solid #222; color: #b0b0b0; box-shadow: inset -2px -2px #888, inset 2px 2px #eee; }
.b-acq span { padding: 2px 6px; border: 1px dotted #222; }
.b-rel { flex: 1; }
.owner { margin-top: 29px; display: grid; grid-template-columns: 86px 1fr; grid-auto-rows: 34px; gap: 1px 0; align-items: center; line-height: 29px; }
.owner > span { text-align: right; padding-right: 9px; }
.detail { padding: 5px 20px 0 18px; font-size: 16px; font-weight: normal; }
.grid { height: 79px; border: 2px solid; border-color: #777 #fafafa #fafafa #777; }
.grid table { border-collapse: collapse; width: 259px; }
.grid th { height: 24px; padding: 0 0 0 5px; font-weight: normal; text-align: left; line-height: 22px; background: #f0f0f2; border-right: 2px solid #222; border-bottom: 1px solid #999; }
.c-ack { width: 47px; }
.unitrow { display: flex; height: 32px; margin: 2px -4px 0 -1px; align-items: center; }
.unitrow input { flex: 1; min-width: 0; height: 30px; padding-left: 8px; border: 1px solid #84a4c4; color: #50505c; font: 18px "DejaVu Sans Condensed", sans-serif; }
.unitrow button { width: 35px; height: 32px; border: 2px solid; border-color: #fff #777 #777 #fff; }
.unitrow svg { width: 30px; height: 28px; }
.links { margin-top: 8px; height: 46px; display: grid; grid-template-columns: repeat(6, 1fr); border-top: 2px solid #f8f8f8; border-bottom: 1px solid #c0c0c8; }
.links button { border-right: 1px solid #b8bcc8; padding-left: 4px; }
.links svg { width: 36px; height: 36px; }
.links .framed { border: 1px solid #6c88a8; }
.marker { width: 47px; height: 9px; margin: 3px 0 0 1px; border-radius: 5px; background: #0808f0; }

/* Footer */
.row { display: flex; align-items: center; padding: 0 5px 0 3px; height: 34px; }
.banner { display: flex; width: 1500px; flex: 0 1 1500px; height: 32px; align-items: center; border: 1px solid #88a8c0; border-left: 2px solid #f2f2f2; }
.banner > span, .slot { height: 24px; border-right: 1px solid #c8c8c8; }
.lead { width: 34px; }
.slot { width: 222px; display: flex; justify-content: flex-end; padding-right: 25px; }
.gap { width: 31px; }
.slot button { width: 27px; height: 25px; border: 1px solid #80a0b8; font: 13px "Liberation Mono", monospace; }
.slot .on { background: #c0fcc0; }
.acks { display: flex; margin-left: auto; }
.acks button { width: 56px; height: 31px; border: 2px solid; border-color: #f6f6f6 #808080 #808080 #f6f6f6; margin-bottom: 3px; }
.acks .horn { width: 46px; }
.acks svg { width: 26px; height: 24px; }
.acks .horn svg { width: 40px; height: 30px; }
.help.low { margin-left: 6px; height: 25px; margin-top: 2px; }
.second { padding-top: 10px; height: 47px; align-items: flex-start; margin-bottom: 29px; }
.fields { display: flex; height: 24px; }
.fields span { border: 1px solid #7ca0c0; }
.f1 { width: 173px; }
.f2 { width: 369px; margin-left: 6px; }
.f3 { width: 347px; margin-left: 6px; }
.f4 { width: 150px; margin-left: 9px; }
.f5 { width: 154px; margin-left: 6px; }
.filters { display: flex; margin-left: auto; }
.filters button { width: 28px; height: 26px; border: 1px solid; border-color: #777 #eee #eee #777; }
.filters svg { width: 25px; height: 23px; }
.counts { display: flex; margin-left: 6px; }
.counts button { width: 56px; height: 26px; gap: 10px; border: 2px solid; border-color: #f4f4f4 #777 #777 #f4f4f4; background: #d4d4d4; font: bold 16px "Liberation Sans", sans-serif; }
.counts svg { width: 24px; height: 20px; }
.counts .node { width: 46px; background: #b4b4b4; }
.counts .node svg { width: 36px; height: 20px; }
.lights { margin-left: 3px; width: 28px; height: 26px; background: #d8d8d8; border: 2px solid; border-color: #f6f6f6 #777 #777 #f6f6f6; }
.lights svg { width: 28px; height: 26px; }
```
